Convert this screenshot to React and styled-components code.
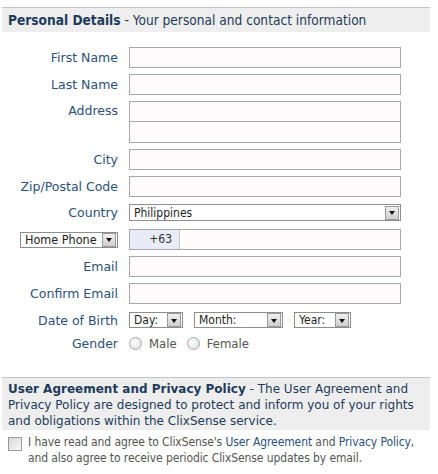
import React from 'react';
import styled, { createGlobalStyle } from 'styled-components';

const GlobalStyle = createGlobalStyle`
  body {
    margin: 0;
    background: #ffffff;
    font-family: "DejaVu Sans Condensed", "DejaVu Sans", Verdana, sans-serif;
  }
`;

const Page = styled.div`
  width: 428px;
  padding: 7px 0 0 2px;
`;

const SectionHeader = styled.div`
  border-top: 1px solid #c4c4c4;
  background: #eeeeee;
  color: #1d3b5a;
  font-size: ${({ $wide }) => ($wide ? '12px' : '13.6px')};
  line-height: 16px;
  padding: ${({ $wide }) => ($wide ? '3px 6px 1px' : '4px 6px 4px')};
  margin-top: ${({ $mt }) => $mt || 0}px;
  font-family: ${({ $wide }) => ($wide ? '"DejaVu Sans", Verdana, sans-serif' : '"DejaVu Sans Condensed", "DejaVu Sans", sans-serif')};
  b {
    font-weight: bold;
  }
`;

const Form = styled.div`
  display: flex;
  flex-direction: column;
  gap: 6px;
  padding-top: 15px;
`;

const Row = styled.div`
  display: grid;
  grid-template-columns: 116px 272px;
  column-gap: 11px;
  align-items: center;
  min-height: ${({ $h }) => ($h ? `${$h}px` : 'auto')};
  margin-top: ${({ $mt }) => $mt || 0}px;
`;

const Label = styled.div`
  text-align: right;
  color: #2c5079;
  font-family: "DejaVu Sans", Verdana, sans-serif;
  font-size: 12.5px;
  align-self: ${({ $top }) => ($top ? 'start' : 'center')};
  padding-top: ${({ $top }) => ($top ? '2px' : '0')};
`;

const TextBox = styled.div`
  height: 21px;
  box-sizing: border-box;
  border: 1px solid #a8a8a8;
  background: #fffafc;
`;

const Stack = styled.div`
  display: flex;
  flex-direction: column;
  ${TextBox} + ${TextBox} {
    border-top: none;
  }
`;

const Select = styled.div`
  display: flex;
  align-items: center;
  justify-content: space-between;
  box-sizing: border-box;
  height: ${({ $h }) => $h || 17}px;
  width: ${({ $w }) => ($w ? `${$w}px` : 'auto')};
  border: 1px solid #8e8e8e;
  background: #ffffff;
  color: #1f1f1f;
  font-size: 12px;
  padding-left: 4px;
`;

const Arrow = styled.span`
  width: 14px;
  height: 14px;
  box-sizing: border-box;
  margin: 0 1px;
  border: 1px solid #9a9a9a;
  background: linear-gradient(#f0f0f0, #cfcfcf);
  display: flex;
  align-items: center;
  justify-content: center;
  &::after {
    content: '';
    border-left: 3px solid transparent;
    border-right: 3px solid transparent;
    border-top: 4px solid #111;
    margin-top: 1px;
  }
`;

const PhoneSelect = styled(Select)`
  margin-left: 18px;
  height: 16px;
  color: #222;
  font-size: 12.5px;
`;

const PhoneBox = styled(TextBox)`
  display: flex;
`;

const Prefix = styled.div`
  width: 50px;
  background: #e9ecf6;
  border-right: 1px solid #c4c4c4;
  color: #333;
  font-size: 12px;
  line-height: 19px;
  text-align: right;
  padding-right: 7px;
  box-sizing: border-box;
`;

const Inline = styled.div`
  display: flex;
  align-items: center;
  gap: ${({ $gap }) => $gap || 11}px;
`;

const Radio = styled.span`
  width: 11px;
  height: 11px;
  border-radius: 50%;
  border: 1px solid #a9a9a9;
  background: radial-gradient(circle at 40% 40%, #ffffff, #d8d8d8);
`;

const Option = styled.label`
  display: flex;
  align-items: center;
  gap: 7px;
  color: #555;
  font-size: 13px;
`;

const Agree = styled.div`
  display: flex;
  gap: 6px;
  margin: 4px 0 0 6px;
  color: #555;
  font-size: 12px;
  line-height: 16px;
  letter-spacing: -0.1px;
  font-family: "DejaVu Sans Condensed", "DejaVu Sans", sans-serif;
  a {
    color: #2c5079;
    text-decoration: none;
  }
`;

const Check = styled.span`
  flex: none;
  width: 12px;
  height: 12px;
  margin-top: 3px;
  border: 1px solid #9a9a9a;
  background: linear-gradient(135deg, #d6d6d6, #fbfbfb);
`;

const Field = ({ label, children, mt, h, top }) => (
  <Row $mt={mt} $h={h}>
    <Label $top={top}>{label}</Label>
    {children}
  </Row>
);

const App = () => (
  <Page>
    <GlobalStyle />
    <SectionHeader>
      <b>Personal Details</b> - Your personal and contact information
    </SectionHeader>
    <Form>
      <Field label="First Name"><TextBox /></Field>
      <Field label="Last Name"><TextBox /></Field>
      <Field label="Address" top>
        <Stack>
          <TextBox />
          <TextBox />
        </Stack>
      </Field>
      <Field label="City"><TextBox /></Field>
      <Field label="Zip/Postal Code"><TextBox /></Field>
      <Field label="Country" mt={1}>
        <Select>Philippines<Arrow /></Select>
      </Field>
      <Row $mt={2}>
        <PhoneSelect>Home Phone<Arrow /></PhoneSelect>
        <PhoneBox><Prefix>+63</Prefix></PhoneBox>
      </Row>
      <Field label="Email"><TextBox /></Field>
      <Field label="Confirm Email"><TextBox /></Field>
      <Field label="Date of Birth" mt={2}>
        <Inline>
          <Select $w={54} $h={16}>Day:<Arrow /></Select>
          <Select $w={89} $h={16}>Month:<Arrow /></Select>
          <Select $w={57} $h={16}>Year:<Arrow /></Select>
        </Inline>
      </Field>
      <Field label="Gender" h={18}>
        <Inline $gap={10}>
          <Option><Radio />Male</Option>
          <Option><Radio />Female</Option>
        </Inline>
      </Field>
    </Form>
    <SectionHeader $wide $mt={25}>
      <b>User Agreement and Privacy Policy</b> - The User Agreement and Privacy Policy are designed to protect and inform you of your rights and obligations within the ClixSense service.
    </SectionHeader>
    <Agree>
      <Check />
      <span>
        I have read and agree to ClixSense's <a>User Agreement</a> and <a>Privacy Policy</a>, and also agree to receive periodic ClixSense updates by email.
      </span>
    </Agree>
  </Page>
);

export default App;
